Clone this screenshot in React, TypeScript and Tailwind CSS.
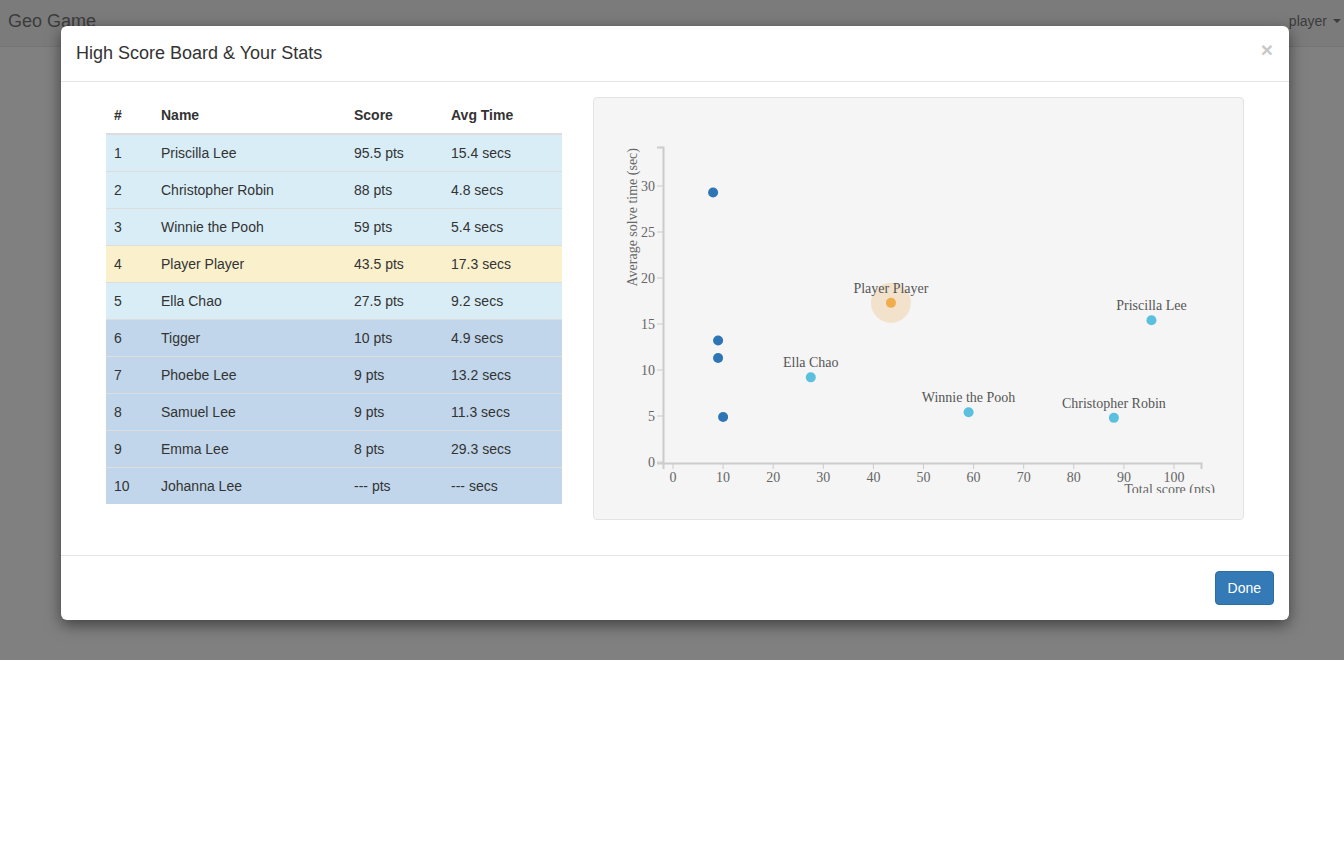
import React from 'react';

type Row = {
  rank: number;
  name: string;
  score: string;
  time: string;
  bg: string;
};

const rows: Row[] = [
  { rank: 1, name: 'Priscilla Lee', score: '95.5 pts', time: '15.4 secs', bg: 'bg-[#d9edf7]' },
  { rank: 2, name: 'Christopher Robin', score: '88 pts', time: '4.8 secs', bg: 'bg-[#d9edf7]' },
  { rank: 3, name: 'Winnie the Pooh', score: '59 pts', time: '5.4 secs', bg: 'bg-[#d9edf7]' },
  { rank: 4, name: 'Player Player', score: '43.5 pts', time: '17.3 secs', bg: 'bg-[#faf0cc]' },
  { rank: 5, name: 'Ella Chao', score: '27.5 pts', time: '9.2 secs', bg: 'bg-[#d9edf7]' },
  { rank: 6, name: 'Tigger', score: '10 pts', time: '4.9 secs', bg: 'bg-[#c1d6ea]' },
  { rank: 7, name: 'Phoebe Lee', score: '9 pts', time: '13.2 secs', bg: 'bg-[#c1d6ea]' },
  { rank: 8, name: 'Samuel Lee', score: '9 pts', time: '11.3 secs', bg: 'bg-[#c1d6ea]' },
  { rank: 9, name: 'Emma Lee', score: '8 pts', time: '29.3 secs', bg: 'bg-[#c1d6ea]' },
  { rank: 10, name: 'Johanna Lee', score: '--- pts', time: '--- secs', bg: 'bg-[#c1d6ea]' },
];

type Point = { name: string; score: number; time: number; kind: 'top' | 'other' | 'me' };

const points: Point[] = [
  { name: 'Priscilla Lee', score: 95.5, time: 15.4, kind: 'top' },
  { name: 'Christopher Robin', score: 88, time: 4.8, kind: 'top' },
  { name: 'Winnie the Pooh', score: 59, time: 5.4, kind: 'top' },
  { name: 'Player Player', score: 43.5, time: 17.3, kind: 'me' },
  { name: 'Ella Chao', score: 27.5, time: 9.2, kind: 'top' },
  { name: 'Tigger', score: 10, time: 4.9, kind: 'other' },
  { name: 'Phoebe Lee', score: 9, time: 13.2, kind: 'other' },
  { name: 'Samuel Lee', score: 9, time: 11.3, kind: 'other' },
  { name: 'Emma Lee', score: 8, time: 29.3, kind: 'other' },
];

// chart scale (svg coords, origin at panel inner top-left)
const X0 = 79;
const XU = 5.01;
const Y0 = 364;
const YU = 9.2;
const sx = (v: number) => X0 + v * XU;
const sy = (v: number) => Y0 - v * YU;

const axis = '#cccccc';
const serif = { fontFamily: '"Liberation Serif", "Times New Roman", serif' };

const ScoreChart = () => (
  <svg width={649} height={395} className="block overflow-hidden" style={serif}>
    {/* y axis */}
    <path d="M63,49.5H69.5V365.5H63" fill="none" stroke={axis} strokeWidth={2} />
    {[0, 5, 10, 15, 20, 25, 30].map((v) => (
      <g key={v}>
        <line x1={63} x2={69} y1={sy(v)} y2={sy(v)} stroke={axis} strokeWidth={1} />
        <text x={61} y={sy(v) + 5} textAnchor="end" fontSize={14} fill="#666">
          {v}
        </text>
      </g>
    ))}
    <text transform="translate(43,50) rotate(-90)" textAnchor="end" fontSize={14} fill="#666">
      Average solve time (sec)
    </text>

    {/* x axis */}
    <path d="M69.5,371V365.5H607.5V371" fill="none" stroke={axis} strokeWidth={2} />
    {[0, 10, 20, 30, 40, 50, 60, 70, 80, 90, 100].map((v) => (
      <g key={v}>
        <line x1={sx(v)} x2={sx(v)} y1={365} y2={371} stroke={axis} strokeWidth={1} />
        <text x={sx(v)} y={384} textAnchor="middle" fontSize={14} fill="#666">
          {v}
        </text>
      </g>
    ))}
    <text x={621} y={396} textAnchor="end" fontSize={14} fill="#666">
      Total score (pts)
    </text>

    {/* points */}
    {points.map((p) => {
      const cx = sx(p.score);
      const cy = sy(p.time);
      const fill = p.kind === 'other' ? '#2e75b6' : p.kind === 'me' ? '#f0ad4e' : '#5bc0de';
      return (
        <g key={p.name}>
          {p.kind === 'me' && <circle cx={cx} cy={cy} r={20} fill="#f0ad4e" opacity={0.25} />}
          <circle cx={cx} cy={cy} r={5} fill={fill} />
          {p.kind !== 'other' && (
            <text x={cx} y={cy - 10} textAnchor="middle" fontSize={14} fill="#555">
              {p.name}
            </text>
          )}
        </g>
      );
    })}
  </svg>
);

export default function App() {
  return (
    <div className="relative min-h-[841px] bg-white" style={{ fontFamily: '"Liberation Sans", Arial, sans-serif' }}>
      <div className="h-[660px] bg-[#808080]">
        <div className="flex h-[47px] items-center justify-between border-b border-[#747474] bg-[#7b7b7b] pb-1 pl-2 pr-[3px]">
          <span className="text-[18px] text-[#3c3c3c]">Geo Game</span>
          <span className="flex items-center gap-[6px] text-[14px] text-[#3c3c3c]">
            player
            <span className="h-0 w-0 border-x-[4px] border-t-[4px] border-x-transparent border-t-[#3c3c3c]" />
          </span>
        </div>
      </div>

      {/* modal */}
      <div className="absolute left-[61px] top-[26px] w-[1228px] rounded-[6px] bg-white text-[#333] shadow-[0_5px_15px_rgba(0,0,0,0.5)]">
        <div className="flex h-[56px] items-center justify-between border-b border-[#e5e5e5] px-[15px]">
          <h4 className="pb-[2px] text-[18px] leading-[26px]">High Score Board &amp; Your Stats</h4>
          <span className="mb-[9px] mr-[1px] text-[21px] font-bold leading-none text-[#c8c8c8]">×</span>
        </div>

        <div className="flex h-[473px] gap-[31px] px-[45px] pt-[15px]">
          <table className="h-fit w-[456px] border-collapse text-[14px] leading-5">
            <thead>
              <tr className="border-b-2 border-[#ddd] text-left">
                <th className="w-[47px] p-2 font-bold">#</th>
                <th className="w-[193px] p-2 font-bold">Name</th>
                <th className="w-[97px] p-2 font-bold">Score</th>
                <th className="p-2 font-bold">Avg Time</th>
              </tr>
            </thead>
            <tbody>
              {rows.map((r) => (
                <tr key={r.rank} className={`border-t border-[#dddddd] ${r.bg}`}>
                  <td className="p-2">{r.rank}</td>
                  <td className="p-2">{r.name}</td>
                  <td className="p-2">{r.score}</td>
                  <td className="p-2">{r.time}</td>
                </tr>
              ))}
            </tbody>
          </table>

          <div className="h-[423px] w-[651px] rounded-[4px] border border-[#e3e3e3] bg-[#f5f5f5]">
            <ScoreChart />
          </div>
        </div>

        <div className="flex justify-end border-t border-[#e5e5e5] p-[15px]">
          <button className="h-[34px] rounded-[4px] border border-[#2e6da4] bg-[#337ab7] px-3 text-[14px] text-white">
            Done
          </button>
        </div>
      </div>
    </div>
  );
}
